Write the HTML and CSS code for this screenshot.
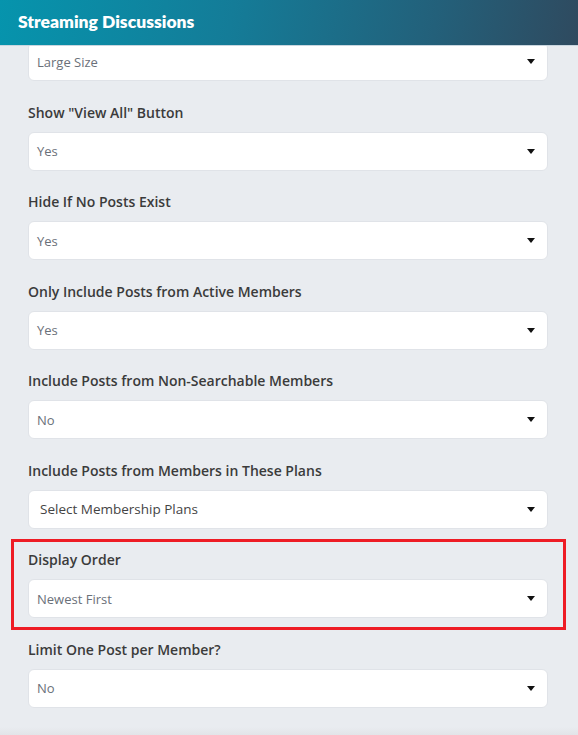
FILE: index.html
```html
<!DOCTYPE html>
<html>
<head>
<meta charset="utf-8">
<link rel="stylesheet" href="styles.css">
</head>
<body>
<header class="topbar"><h1 class="title">Streaming Discussions</h1></header>
<main class="form">
  <div class="group">
    <div class="select"><span class="value">Large Size</span><span class="caret"></span></div>
  </div>
  <div class="group">
    <label class="label">Show "View All" Button</label>
    <div class="select"><span class="value">Yes</span><span class="caret"></span></div>
  </div>
  <div class="group">
    <label class="label">Hide If No Posts Exist</label>
    <div class="select"><span class="value">Yes</span><span class="caret"></span></div>
  </div>
  <div class="group">
    <label class="label">Only Include Posts from Active Members</label>
    <div class="select"><span class="value">Yes</span><span class="caret"></span></div>
  </div>
  <div class="group">
    <label class="label">Include Posts from Non-Searchable Members</label>
    <div class="select"><span class="value">No</span><span class="caret"></span></div>
  </div>
  <div class="group">
    <label class="label">Include Posts from Members in These Plans</label>
    <div class="select multi"><span class="value">Select Membership Plans</span><span class="caret"></span></div>
  </div>
  <div class="group highlighted">
    <label class="label">Display Order</label>
    <div class="select"><span class="value">Newest First</span><span class="caret"></span></div>
    <span class="highlight-box"></span>
  </div>
  <div class="group">
    <label class="label">Limit One Post per Member?</label>
    <div class="select"><span class="value">No</span><span class="caret"></span></div>
  </div>
</main>
<footer class="bottom-edge"></footer>
</body>
</html>
```
FILE: styles.css
```css
* { box-sizing: border-box; }
html, body { margin: 0; padding: 0; }
body {
  background: #e9ecf0;
  font-family: "Open Sans", "Noto Sans", sans-serif;
  width: 578px;
  height: 735px;
  overflow: hidden;
  position: relative;
}
.topbar {
  position: fixed;
  top: 0; left: 0; right: 0;
  height: 46px;
  background: linear-gradient(100deg, #0694ad 0%, #147c98 40%, #23607a 75%, #2f4a5f 100%);
  border-bottom: 1px solid #c9d6df;
  display: flex;
  align-items: center;
  padding: 0 0 3px 18px;
  z-index: 2;
}
.title {
  margin: 0;
  color: #ffffff;
  font-family: "Lato", "Open Sans", sans-serif;
  font-size: 17.5px;
  font-weight: 800;
}
.form {
  display: flex;
  flex-direction: column;
  gap: 19.5px;
  padding: 42px 30px 0 28px;
}
.group {
  display: flex;
  flex-direction: column;
  gap: 11px;
  position: relative;
}
.label {
  display: block;
  height: 20px;
  line-height: 23px;
  font-size: 14px;
  font-weight: 600;
  color: #3b3b3b;
}
.select {
  height: 39px;
  background: #fff;
  border: 1px solid #e0e3e8;
  border-radius: 6px;
  display: flex;
  align-items: center;
  justify-content: space-between;
  padding: 0 12px 0 8px;
}
.value {
  font-size: 13px;
  color: #6a7079;
}
.multi .value {
  padding-left: 3px;
  font-size: 13.5px;
  color: #444;
}
.caret {
  width: 0; height: 0;
  border-left: 4px solid transparent;
  border-right: 4px solid transparent;
  border-top: 5px solid #111;
}
.highlight-box {
  position: absolute;
  top: -9px; left: -17px; right: -18px; bottom: -12px;
  border: 3px solid #ee1c25;
  pointer-events: none;
}
.bottom-edge {
  position: absolute;
  left: 0; right: 0; bottom: 0;
  height: 8px;
  background: linear-gradient(#e9ecf0, #e2e4e8);
}
```
